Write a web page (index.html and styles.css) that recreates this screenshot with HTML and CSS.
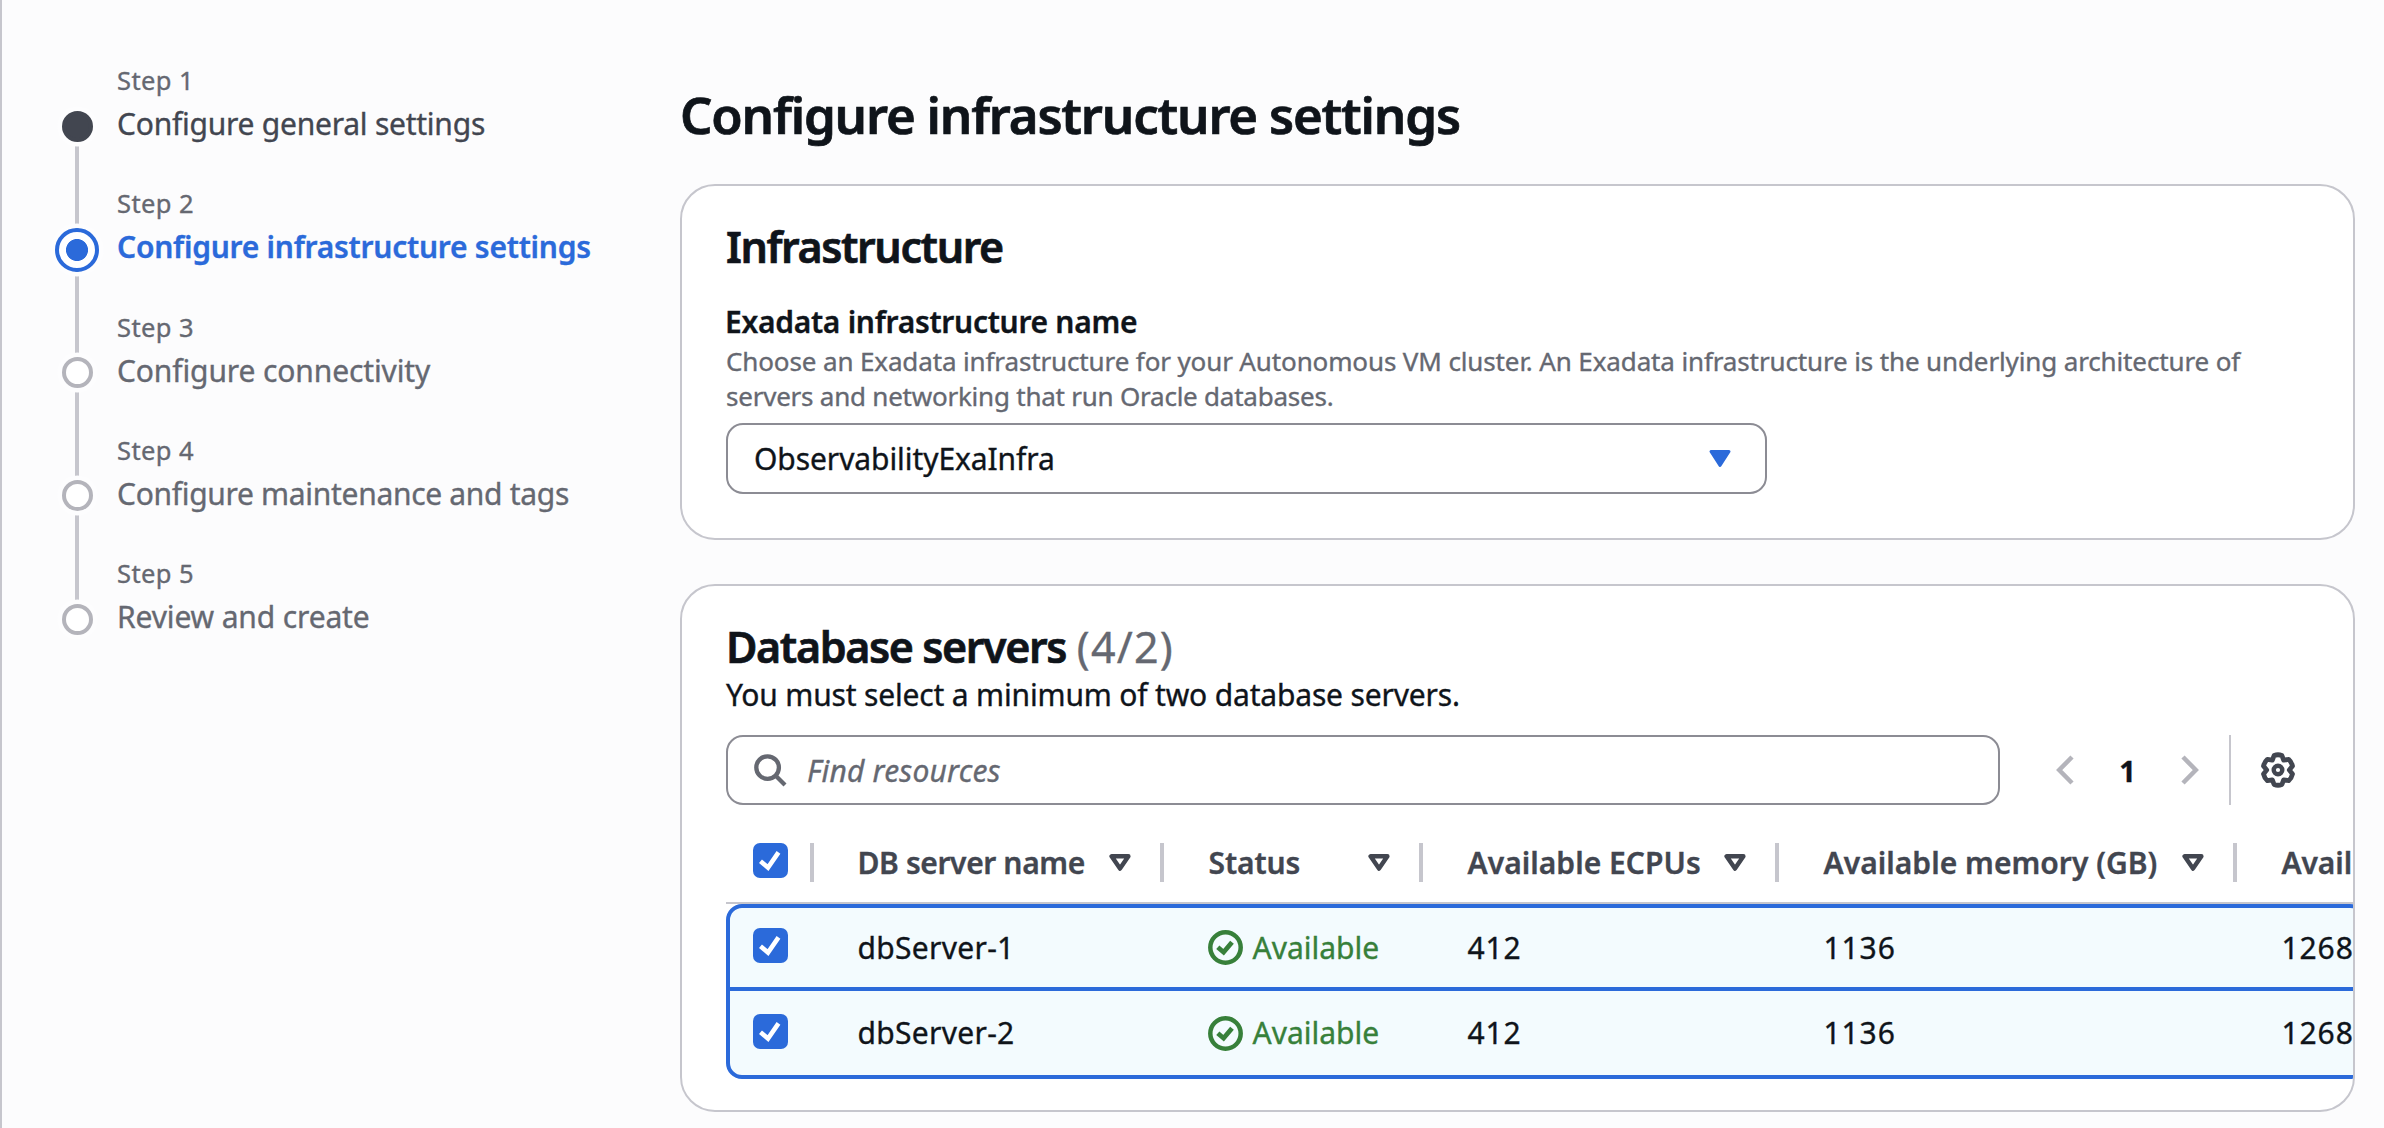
FILE: index.html
```html
<!DOCTYPE html>
<html lang="en">
<head>
<meta charset="utf-8">
<title>Configure infrastructure settings</title>
<link rel="stylesheet" href="styles.css">
</head>
<body>
<svg class="sprite" aria-hidden="true">
  <symbol id="check" viewBox="0 0 35 35"><path d="M7.5 18.3 15 24.6 25.5 9.4" fill="none" stroke="#fff" stroke-width="4.6"/></symbol>
  <symbol id="sort" viewBox="0 0 22 18"><path d="M2.6 2.3h16.8L11 14.6z" fill="none" stroke="#424650" stroke-width="4.4" stroke-linejoin="round"/></symbol>
  <symbol id="success" viewBox="0 0 35 35"><g fill="none" stroke="#37803a"><circle cx="17.5" cy="17.5" r="15.2" stroke-width="4.5"/><path d="M9.8 17.2 15.6 22.2 24 12.2" stroke-width="4.8"/></g></symbol>
</svg>
<nav class="nav">
  <ol class="steps">
    <li class="step done"><span class="dot"></span><div><div class="step-no">Step 1</div><div class="step-name general">Configure general settings</div></div></li>
    <li class="step active"><span class="dot"></span><div><div class="step-no">Step 2</div><div class="step-name">Configure infrastructure settings</div></div></li>
    <li class="step"><span class="dot"></span><div><div class="step-no">Step 3</div><div class="step-name connectivity">Configure connectivity</div></div></li>
    <li class="step"><span class="dot"></span><div><div class="step-no">Step 4</div><div class="step-name maintenance">Configure maintenance and tags</div></div></li>
    <li class="step"><span class="dot"></span><div><div class="step-no">Step 5</div><div class="step-name review">Review and create</div></div></li>
  </ol>
</nav>
<main class="main">
  <h1>Configure infrastructure settings</h1>
  <section class="card infra">
    <h2>Infrastructure</h2>
    <div class="label">Exadata infrastructure name</div>
    <p class="hint">Choose an Exadata infrastructure for your Autonomous VM cluster. An Exadata infrastructure is the underlying architecture of<br><span class="hint-end">servers and networking that run Oracle databases.</span></p>
    <div class="select"><span>ObservabilityExaInfra</span><svg width="24" height="19" viewBox="0 0 24 19"><path d="M3 2.5h18L12 16.5z" fill="#2b6ada" stroke="#2b6ada" stroke-width="3" stroke-linejoin="round"/></svg></div>
  </section>
  <section class="card servers">
    <h2>Database servers <span class="count">(4/2)</span></h2>
    <p class="sub">You must select a minimum of two database servers.</p>
    <div class="toolbar">
      <div class="search"><svg width="33" height="33" viewBox="0 0 33 33" fill="none" stroke="#656871" stroke-width="4.3"><circle cx="13.6" cy="13.6" r="11.3"/><path d="M21.5 21.5 31 31"/></svg><span>Find resources</span></div>
      <div class="pager">
        <svg width="18" height="30" viewBox="0 0 18 30"><path d="M16 2 3.2 15 16 28" fill="none" stroke="#b4b4bb" stroke-width="4.5"/></svg>
        <span class="page">1</span>
        <svg width="18" height="30" viewBox="0 0 18 30"><path d="M2 2 14.8 15 2 28" fill="none" stroke="#b4b4bb" stroke-width="4.5"/></svg>
      </div>
      <div class="prefs"><svg width="36" height="36" viewBox="0 0 36 36" fill="none" stroke="#424650" stroke-width="4.8" stroke-linejoin="round"><path d="M14.1 3.5Q18 2 21.9 3.5L23.65 8.2 28.6 7.4Q31.6 10 32.5 14.1L29.3 18 32.5 21.9Q31.6 26 28.6 28.6L23.65 27.8 21.9 32.5Q18 34 14.1 32.5L12.35 27.8 7.4 28.6Q4.4 26 3.5 21.9L6.7 18 3.5 14.1Q4.4 10 7.4 7.4L12.35 8.2z"/><circle cx="18" cy="18" r="4.3" stroke-width="4.4"/></svg></div>
    </div>
    <div class="table">
      <div class="row head">
        <div class="cell pick"><span class="box"><svg><use href="#check"/></svg></span></div>
        <div class="cell"><span class="h-name">DB server name</span><svg class="sort"><use href="#sort"/></svg></div>
        <div class="cell"><span>Status</span><svg class="sort"><use href="#sort"/></svg></div>
        <div class="cell"><span class="h-wide">Available ECPUs</span><svg class="sort"><use href="#sort"/></svg></div>
        <div class="cell"><span class="h-wide">Available memory (GB)</span><svg class="sort"><use href="#sort"/></svg></div>
        <div class="cell last"><span>Avail</span></div>
      </div>
      <div class="body">
        <div class="row first">
          <div class="cell pick"><span class="box"><svg><use href="#check"/></svg></span></div>
          <div class="cell server">dbServer-1</div>
          <div class="cell status"><svg><use href="#success"/></svg>Available</div>
          <div class="cell num">412</div>
          <div class="cell num">1136</div>
          <div class="cell num">1268</div>
        </div>
        <div class="row second">
          <div class="cell pick"><span class="box"><svg><use href="#check"/></svg></span></div>
          <div class="cell server">dbServer-2</div>
          <div class="cell status"><svg><use href="#success"/></svg>Available</div>
          <div class="cell num">412</div>
          <div class="cell num">1136</div>
          <div class="cell num">1268</div>
        </div>
      </div>
    </div>
  </section>
</main>
</body>
</html>
```
FILE: styles.css
```css
* { box-sizing: border-box; }
body {
  margin: 0;
  height: 1128px;
  display: flex;
  overflow: hidden;
  background: #fcfcfd;
  border-left: 2px solid #c6c6cd;
  color: #0f141a;
  font: 400 30px/40px "Noto Sans", "Open Sans", sans-serif;
  -webkit-text-stroke: .35px currentColor;
}
h1, h2, p, ol { margin: 0; padding: 0; }
svg { display: block; flex: none; }
.sprite { position: absolute; width: 0; height: 0; }

/* wizard steps */
.nav { width: 678px; flex: none; padding: 60px 0 0 53px; }
.steps {
  list-style: none;
  background: linear-gradient(#c6c6cd, #c6c6cd) 20px 66px / 4px 493px no-repeat;
}
.step { display: flex; gap: 18px; height: 123.3px; color: #656871; }
.dot {
  width: 31px;
  height: 31px;
  margin: 50.5px 6.5px 0;
  flex: none;
  border: 4.5px solid #b4b4bb;
  border-radius: 50%;
  background: #fff;
  box-shadow: 0 0 0 4.5px #fdfdfe;
}
.done .dot { background: #424650; border-color: #424650; }
.active .dot {
  width: 44px;
  height: 44px;
  margin: 45px 0 0;
  border-color: #2b6ada;
  background: radial-gradient(circle, #2b6ada 10.6px, #fff 11.4px) border-box;
}
.step-no { font-size: 25.5px; line-height: 40px; letter-spacing: .4px; }
.step-name { line-height: 48px; white-space: nowrap; letter-spacing: -.12px; }
.step-name.general { letter-spacing: -.24px; color: #424650; }
.step-name.maintenance { letter-spacing: -.31px; }
.step-name.review { letter-spacing: -.14px; }
.active .step-name { color: #2b6ada; font-weight: 600; letter-spacing: -.25px; }

/* content */
.main { width: 1675px; flex: none; padding-top: 84px; }
h1, h2 { font-weight: 600; -webkit-text-stroke-width: .7px; }
h1 { font-size: 51px; line-height: 60px; letter-spacing: -1.2px; margin-bottom: 40px; }
.card { background: #fff; border: 2px solid #c6c6cd; border-radius: 35px; padding: 35px 44px 0; }
h2 { font-size: 43px; line-height: 52px; letter-spacing: -1.4px; }
.infra { height: 356px; margin-bottom: 44px; }
.label { margin-top: 27px; line-height: 44px; font-weight: 600; letter-spacing: -.29px; margin-left: -1px; }
.hint { font-size: 26px; line-height: 35px; letter-spacing: -.13px; color: #656871; white-space: nowrap; }
.hint-end { letter-spacing: -.23px; }
.select {
  width: 1041px;
  height: 71px;
  margin-top: 9px;
  padding: 0 33px 0 26px;
  display: flex;
  align-items: center;
  justify-content: space-between;
  border: 2px solid #8c8c94;
  border-radius: 17px;
  letter-spacing: -.08px;
}

.servers { height: 528px; padding-right: 0; overflow: hidden; }
.count { font-weight: 400; letter-spacing: 1.2px; color: #656871; margin-left: 1px; -webkit-text-stroke-width: .35px; }
.sub { margin-top: 2px; letter-spacing: -.17px; }
.toolbar { display: flex; margin-top: 20px; height: 70px; align-items: center; }
.search {
  width: 1274px;
  height: 70px;
  padding-left: 26px;
  display: flex;
  align-items: center;
  gap: 20px;
  border: 2px solid #8c8c94;
  border-radius: 17px;
  color: #656871;
  font-style: italic;
  letter-spacing: .2px;
}
.search span { padding-top: 1px; }
.pager { width: 143px; margin-left: 56px; display: flex; align-items: center; justify-content: space-between; }
.page { font-size: 29px; font-weight: 700; padding-top: 1px; }
.prefs { margin-left: 30px; width: 67px; height: 70px; border-left: 2px solid #c6c6cd; display: flex; align-items: center; justify-content: flex-end; }

/* table */
.table { margin-top: 20px; overflow: hidden; }
.row { display: grid; grid-template-columns: 84px 350px 259px 356px 458px 1fr; width: 1640px; }
.cell { display: flex; align-items: center; padding-left: 44.5px; white-space: nowrap; }
.cell.pick { padding-left: 23px; }
.box { width: 35px; height: 35px; margin-bottom: 4px; border-radius: 7px; background: #2b6ada; }
.box svg { width: 35px; height: 35px; }
.head {
  grid-template-columns: 88px 350px 259px 356px 458px 1fr;
  height: 79px;
  padding-bottom: 2px;
  border-bottom: 2px solid #c6c6cd;
  color: #424650;
  font-weight: 600;
  letter-spacing: -.1px;
}
.head .cell { justify-content: space-between; padding-right: 33px; position: relative; }
.head .cell.pick { padding-left: 27px; }
.head .cell::after { content: ""; width: 4px; height: 39px; background: #c6c6cd; position: absolute; right: 0; top: 18px; }
.head .last::after { display: none; }
.head .h-name { letter-spacing: -.38px; margin-left: -1px; }
.h-wide { letter-spacing: .03px; }
.sort { width: 22px; height: 18px; }
.body {
  width: 1640px;
  border: 4px solid #2b6ada;
  border-radius: 16px;
  background: #f3fbfe;
}
.first { height: 83px; border-bottom: 4px solid #2b6ada; }
.second { height: 84px; }
.cell.server { letter-spacing: .3px; padding-left: 43.5px; }
.cell.status { gap: 10px; padding-left: 43.5px; color: #37803a; }
.status svg { width: 35px; height: 35px; }
.num { letter-spacing: .9px; }
```
